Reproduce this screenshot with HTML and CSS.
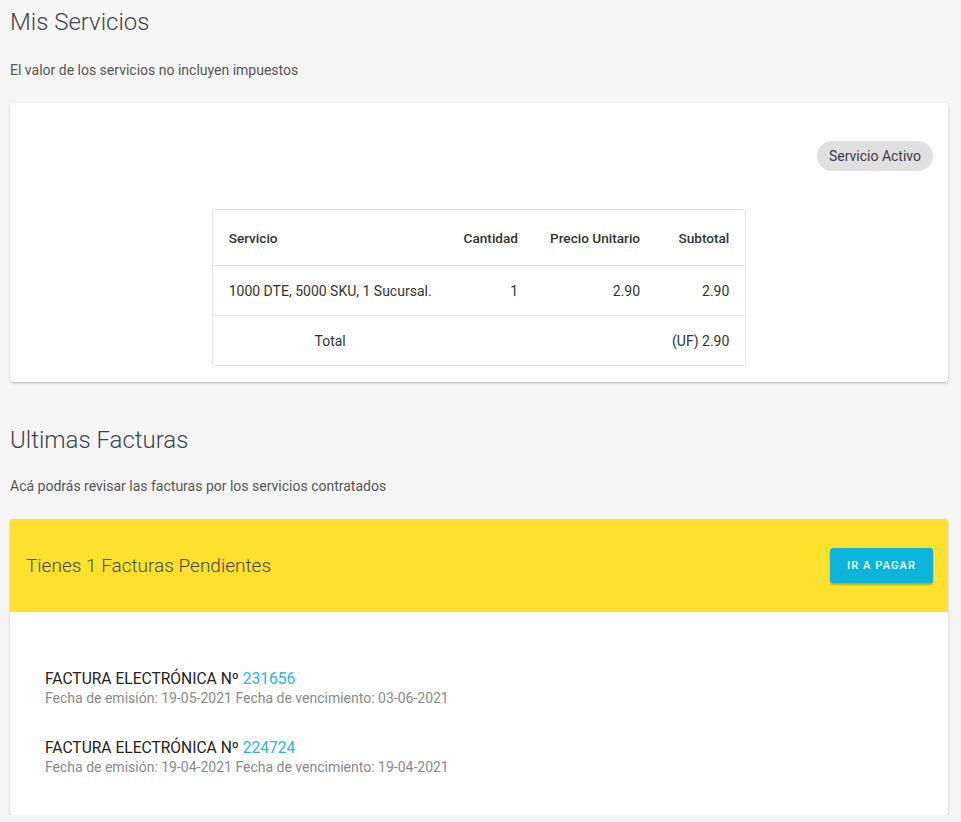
FILE: index.html
```html
<!DOCTYPE html>
<html lang="es">
<head>
<meta charset="utf-8">
<title>Mis Servicios</title>
<link rel="stylesheet" href="styles.css">
</head>
<body>
<div class="page">
  <h1 class="title">Mis Servicios</h1>
  <p class="subtitle">El valor de los servicios no incluyen impuestos</p>
  <section class="card services">
    <div class="chip-row"><span class="chip">Servicio Activo</span></div>
    <div class="table-wrap">
      <table class="svc-table">
        <thead>
          <tr>
            <th class="c1">Servicio</th>
            <th class="num c2">Cantidad</th>
            <th class="num c3">Precio Unitario</th>
            <th class="num c4">Subtotal</th>
          </tr>
        </thead>
        <tbody>
          <tr>
            <td>1000 DTE, 5000 SKU, 1 Sucursal.</td>
            <td class="num">1</td>
            <td class="num">2.90</td>
            <td class="num">2.90</td>
          </tr>
          <tr>
            <td class="center">Total</td>
            <td></td>
            <td></td>
            <td class="num">(UF) 2.90</td>
          </tr>
        </tbody>
      </table>
    </div>
  </section>

  <h1 class="title second">Ultimas Facturas</h1>
  <p class="subtitle second-sub">Acá podrás revisar las facturas por los servicios contratados</p>
  <section class="card invoices">
    <div class="pending">
      <span class="pending-text">Tienes 1 Facturas Pendientes</span>
      <button class="pay-btn">IR A PAGAR</button>
    </div>
    <div class="inv-list">
      <div class="inv">
        <div class="inv-title">FACTURA ELECTRÓNICA Nº <a class="inv-num">231656</a></div>
        <div class="inv-dates">Fecha de emisión: 19-05-2021 Fecha de vencimiento: 03-06-2021</div>
      </div>
      <div class="inv">
        <div class="inv-title">FACTURA ELECTRÓNICA Nº <a class="inv-num">224724</a></div>
        <div class="inv-dates">Fecha de emisión: 19-04-2021 Fecha de vencimiento: 19-04-2021</div>
      </div>
    </div>
  </section>
</div>
</body>
</html>
```

FILE: styles.css
```css
* { box-sizing: border-box; }
html, body {
  margin: 0;
  background: #f5f5f5;
  font-family: Roboto, "Liberation Sans", Arial, sans-serif;
  color: #444;
}
.page {
  padding: 7px 13px 0 10px;
}
.title {
  margin: 0;
  font-size: 24px;
  line-height: 30px;
  font-weight: 300;
  color: #3f444b;
}
.title.second {
  margin-top: 43px;
}
.subtitle {
  margin: 25px 0 0;
  font-size: 14px;
  line-height: 16px;
  color: #555;
}
.subtitle.second-sub {
  margin-top: 23px;
}
.card {
  background: #fff;
  border-radius: 3px;
  box-shadow: 0 1px 3px rgba(0,0,0,0.18), 0 1px 1px rgba(0,0,0,0.1);
}
.services {
  margin-top: 25px;
  height: 279px;
  padding: 38px 15px 0 0;
}
.chip-row {
  display: flex;
  justify-content: flex-end;
}
.chip {
  display: inline-block;
  background: #e0e0e0;
  border-radius: 15px;
  font-size: 14px;
  line-height: 30px;
  height: 30px;
  padding: 0 12px;
  color: #3b3b3b;
}
.table-wrap {
  display: flex;
  justify-content: center;
  margin-top: 38px;
  padding-left: 15px;
}
.svc-table {
  border-collapse: separate;
  border-spacing: 0;
  border: 1px solid #e3e3e3;
  border-radius: 3px;
  font-size: 14px;
  color: #333;
  width: 534px;
}
.svc-table th,
.svc-table td {
  padding: 0 16px;
  text-align: left;
  white-space: nowrap;
}
.svc-table th {
  height: 55px;
  font-size: 13.6px;
  font-weight: 500;
  color: #333;
}
.svc-table td {
  height: 50px;
  border-top: 1px solid #e6e6e6;
}
.svc-table .num { text-align: right; }
.svc-table .center { text-align: center; }
.c1 { width: 236px; }
.c2 { width: 86px; }
.c3 { width: 122px; }
.c4 { width: 88px; }
.invoices {
  margin-top: 25px;
  overflow: hidden;
}
.pending {
  background: #fde12d;
  height: 93px;
  display: flex;
  align-items: center;
  justify-content: space-between;
  padding: 0 15px 0 16px;
}
.pending-text {
  font-size: 19px;
  color: #4a4a4a;
  font-weight: 300;
}
.pay-btn {
  background: #0bb5da;
  color: #fff;
  border: 0;
  border-radius: 3px;
  height: 35px;
  width: 103px;
  font-family: Roboto, "Liberation Sans", Arial, sans-serif;
  font-size: 11px;
  font-weight: 500;
  letter-spacing: 1.1px;
  box-shadow: 0 2px 2px rgba(0,0,0,0.25);
}
.inv-list {
  padding: 58px 35px 38px;
  display: flex;
  flex-direction: column;
  gap: 31px;
}
.inv-title {
  font-size: 15.6px;
  line-height: 18px;
  color: #222;
}
.inv-num {
  color: #2ab7da;
}
.inv-dates {
  font-size: 14px;
  line-height: 20px;
  color: #8a8a8a;
}
```
